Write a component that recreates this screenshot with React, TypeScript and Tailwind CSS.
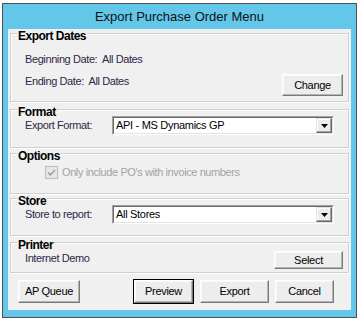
import clsx from "clsx";

// Classic WinForms raised push button
function WinButton({
  label,
  className,
  isDefault,
}: {
  label: string;
  className?: string;
  isDefault?: boolean;
}) {
  return (
    <button
      className={clsx(
        "flex items-center justify-center bg-[#ededed] text-[11px] tracking-[-0.3px] text-black border border-t-white border-l-white border-r-[#7a7a7a] border-b-[#7a7a7a] shadow-[inset_-1px_-1px_0_#b4b4b4,inset_1px_1px_0_#f8f8f8]",
        isDefault && "outline outline-1 outline-black",
        className
      )}
    >
      {label}
    </button>
  );
}

function Combo({ value }: { value: string }) {
  return (
    <div className="flex h-[19px] w-[222px] border border-t-[#a0a0a0] border-l-[#a0a0a0] border-r-white border-b-white">
      <div className="flex flex-1 bg-white border border-t-[#696969] border-l-[#696969] border-r-[#e3e3e3] border-b-[#e3e3e3]">
        <span className="flex-1 pl-[2px] text-[11px] leading-[15px] tracking-[-0.3px] text-black">
          {value}
        </span>
        {/* dropdown arrow button */}
        <div className="flex w-[16px] items-center justify-center bg-[#ececec] border border-t-[#e3e3e3] border-l-[#e3e3e3] border-r-[#696969] border-b-[#696969] shadow-[inset_-1px_-1px_0_#a0a0a0,inset_1px_1px_0_#fff]">
          <svg width="7" height="4" viewBox="0 0 7 4">
            <path d="M0 0h7L3.5 4z" fill="#000" />
          </svg>
        </div>
      </div>
    </div>
  );
}

function Group({
  title,
  className,
  children,
}: {
  title: string;
  className?: string;
  children: React.ReactNode;
}) {
  return (
    <div
      className={clsx(
        "mx-[2px] border border-[#cfcfcf] shadow-[inset_1px_1px_0_#fff,1px_1px_0_#fff]",
        className
      )}
    >
      <div className="-mt-[4px] ml-[6px] w-fit bg-[#f0f0f0] px-[1px] text-[12px] font-bold leading-[12px] tracking-[-0.5px] text-black">
        {title}
      </div>
      {children}
    </div>
  );
}

const label = "text-[11px] leading-[13px] tracking-[-0.4px] text-[#30264a]";

export default function App() {
  return (
    <div className="h-[318px] w-[357px] overflow-hidden bg-white font-['Liberation_Sans',Arial,sans-serif]">
      <div className="ml-[2px] mt-[3px] flex h-[315px] w-[355px] flex-col border border-[#505050] bg-[#63c7ea] px-[5px] pb-[7px]">
        {/* Title bar */}
        <div className="flex h-[25px] items-center justify-center text-[13px] leading-[25px] text-[#111]">
          Export Purchase Order Menu
        </div>

        {/* Client area */}
        <div className="flex-1 bg-[#f0f0f0] pt-[4px]">
          <Group title="Export Dates" className="pb-[5px]">
            <div className="mt-[11px] flex justify-between pl-[14px] pr-[5px]">
              <div>
                <div className={label}>Beginning Date:&nbsp; All Dates</div>
                <div className={clsx(label, "mt-[9px]")}>
                  Ending Date:&nbsp; All Dates
                </div>
              </div>
              <WinButton label="Change" className="mt-[21px] h-[22px] w-[61px]" />
            </div>
          </Group>

          <Group title="Format" className="mt-[7px] pb-[12px]">
            <div className="-mt-[2px] flex items-center pl-[14px]">
              <span className={clsx(label, "w-[87px]")}>Export Format:</span>
              <Combo value="API - MS Dynamics GP" />
            </div>
          </Group>

          <Group title="Options" className="mt-[5px] pb-[14px]">
            <div className="mt-[4px] flex items-center pl-[34px]">
              <div className="flex h-[13px] w-[13px] items-center justify-center border border-[#bcbcbc] bg-[#e6e6e6]">
                <svg width="9" height="9" viewBox="0 0 9 9">
                  <path
                    d="M1 4.5l2.3 2.3L8 2"
                    fill="none"
                    stroke="#a0a0a0"
                    strokeWidth="1.6"
                  />
                </svg>
              </div>
              <span className="ml-[4px] text-[11px] leading-[13px] tracking-[-0.4px] text-[#a3a3a3]">
                Only include PO's with invoice numbers
              </span>
            </div>
          </Group>

          <Group title="Store" className="mt-[4px] pb-[11px]">
            <div className="-mt-[2px] flex items-center pl-[14px]">
              <span className={clsx(label, "w-[87px]")}>Store to report:</span>
              <Combo value="All Stores" />
            </div>
          </Group>

          <Group title="Printer" className="mt-[6px] pb-[3px]">
            <div className="flex items-start justify-between pl-[14px] pr-[5px]">
              <span className={clsx(label, "mt-[1px]")}>Internet Demo</span>
              <WinButton label="Select" className="h-[18px] w-[69px]" />
            </div>
          </Group>

          {/* Bottom buttons */}
          <div className="mt-[7px] flex pl-[10px]">
            <WinButton label="AP Queue" className="h-[23px] w-[62px]" />
            <WinButton label="Preview" isDefault className="ml-[54px] h-[23px] w-[59px]" />
            <WinButton label="Export" className="ml-[7px] h-[23px] w-[69px]" />
            <WinButton label="Cancel" className="ml-[6px] h-[23px] w-[59px]" />
          </div>
        </div>
      </div>
    </div>
  );
}
